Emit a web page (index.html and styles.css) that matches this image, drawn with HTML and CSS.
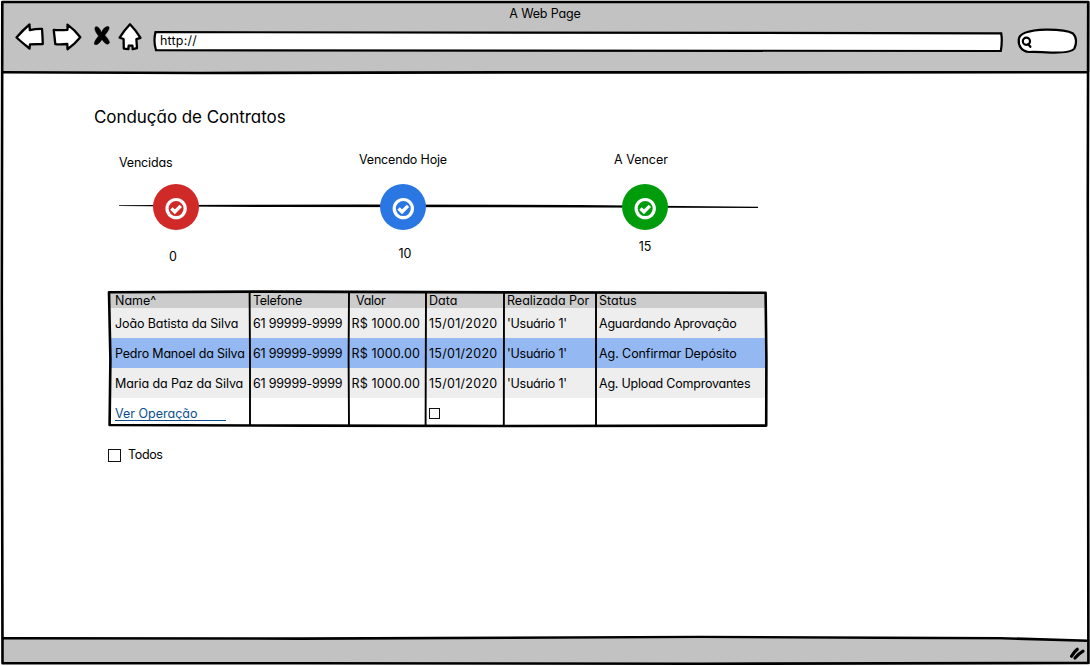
FILE: index.html
```html
<!DOCTYPE html>
<html lang="pt-BR">
<head>
<meta charset="utf-8">
<title>A Web Page</title>
<link rel="stylesheet" href="styles.css">
</head>
<body>
<div class="browser">
  <header class="chrome">
    <div class="window-title">A Web Page</div>
    <div class="toolbar">
      <svg class="nav back" viewBox="0 0 32 32"><path d="M2.5 15.5Q9 8 15.5 2.5L15.8 8.2Q22 6.6 28 6.8Q28.6 14 28.8 22L16 22.3L15.5 26.5Q8.5 21 2.5 15.5Z"/></svg>
      <svg class="nav forward" viewBox="0 0 32 32"><path d="M2.7 7.8Q9 8.3 16.5 7.8L16.5 2.6Q24 8 29.3 15.3Q24 22 16.5 27.2L16.3 22Q10 22.7 4.3 22.2Q3.6 15 2.7 7.8Z"/></svg>
      <svg class="nav stop" viewBox="0 0 20 32"><path class="x" d="M3.6 4.8Q6.8 4 9.5 10.5Q12 4.3 16.2 4.5Q19.3 5.3 12.8 13.2Q17.6 18.5 17.4 21Q15 24.5 10 17.4Q5.5 24 2.5 22.3Q1.6 20 6.6 14Q1.2 7.2 3.6 4.8Z"/></svg>
      <svg class="nav home" viewBox="0 0 26 32"><path d="M13 2.3Q19 8.5 23.5 15.8L19.4 17.2L20 26.2L15.7 27.2L15.4 23.6L11.7 23.7L11.4 27.2L6.8 26.6L6.6 17L2.6 15.7Q7.5 8 13 2.3Z"/></svg>
      <div class="address">
        <svg class="outline" viewBox="0 0 852 24"><path d="M3.5 3.1Q300 2.1 849.2 4.3Q850.5 12 848.8 22Q500 22.4 4 21.2Q1.2 12 3.5 3.1Z"/></svg>
        <span class="url">http://</span>
      </div>
      <svg class="search" viewBox="0 0 64 32"><path class="pill" d="M3.8 14.5C4 8 16 5.2 31 4.7C44 4.6 53 5.6 58 8.5C62 12.5 61.6 19 59.4 23.5C57 27 46 27.8 36 27.6C27 27 22 26.8 14 27C7 26.5 3 21 3.8 14.5Z"/><circle class="lens" cx="11.4" cy="16.2" r="3.6"/><path class="lens" d="M13.2 19.2L15.4 21.8"/></svg>
    </div>
  </header>

  <main class="page">
    <h1 class="heading">Condução de Contratos</h1>

    <section class="steps">
      <svg class="track" viewBox="0 0 640 6"><path d="M0 2.2L36 2L240 1.6L460 2L639 3.7L639 4.9L380 4.3L150 4L60 3.5L0 2.9Z"/></svg>
      <div class="step overdue">
        <span class="label">Vencidas</span>
        <svg class="node" viewBox="0 0 46 46"><circle class="disc" cx="23" cy="23" r="23"/><circle class="ring" cx="23.1" cy="24.6" r="9.1"/><path class="tick" d="M18.4 24.5L21.8 27.8L27.8 21.9"/></svg>
        <span class="count">0</span>
      </div>
      <div class="step today">
        <span class="label">Vencendo Hoje</span>
        <svg class="node" viewBox="0 0 46 46"><circle class="disc" cx="23" cy="23" r="23"/><circle class="ring" cx="23.3" cy="24.6" r="9.1"/><path class="tick" d="M18.6 24.5L22 27.8L28 21.9"/></svg>
        <span class="count">10</span>
      </div>
      <div class="step upcoming">
        <span class="label">A Vencer</span>
        <svg class="node" viewBox="0 0 46 46"><circle class="disc" cx="23" cy="23" r="23"/><circle class="ring" cx="23.2" cy="24.6" r="9.1"/><path class="tick" d="M18.5 24.5L21.9 27.8L27.9 21.9"/></svg>
        <span class="count">15</span>
      </div>
    </section>

    <section class="contracts">
      <div class="row head"><span>Name^</span><span class="c-phone-head">Telefone</span><span class="c-value-head">Valor</span><span>Data</span><span>Realizada Por</span><span>Status</span></div>
      <div class="row"><span class="c-name">João Batista da Silva</span><span class="c-phone">61 99999-9999</span><span class="c-value">R$ 1000.00</span><span class="c-date">15/01/2020</span><span class="c-user">'Usuário 1'</span><span class="c-status">Aguardando Aprovação</span></div>
      <div class="row selected"><span class="c-name tight">Pedro Manoel da Silva</span><span class="c-phone">61 99999-9999</span><span class="c-value">R$ 1000.00</span><span class="c-date">15/01/2020</span><span class="c-user">'Usuário 1'</span><span class="c-status loose">Ag. Confirmar Depósito</span></div>
      <div class="row"><span class="c-name">Maria da Paz da Silva</span><span class="c-phone">61 99999-9999</span><span class="c-value">R$ 1000.00</span><span class="c-date">15/01/2020</span><span class="c-user">'Usuário 1'</span><span class="c-status">Ag. Upload Comprovantes</span></div>
      <div class="row last"><span><a class="link">Ver Operação</a></span><span></span><span></span><span class="c-box"><i class="box small"></i></span><span></span><span></span></div>
      <svg class="rules" viewBox="0 0 662 140">
        <path class="edge" d="M2 3.2L160 2.6L400 3.4L658.6 3.8L659.4 70L659.2 136.6L400 137L200 136.6L2.6 136L3.4 70L2 3.2Z"/>
        <path class="divider" d="M142.6 3L143 70L143 136M242 3L241.6 70L242 136M319 3L318.6 136M397 3L396.8 136M489 3L489 136"/>
      </svg>
    </section>

    <div class="all"><i class="box"></i><span>Todos</span></div>
  </main>

  <footer class="statusbar">
    <svg class="grip" viewBox="0 0 18 16"><path d="M2.5 11.2Q5 7 8.3 4.2M6 13Q10 8.5 14 6.2"/></svg>
  </footer>

  <svg class="frame" viewBox="0 0 1090 666">
    <path class="corner" d="M0 638.4H300Q800 636.5 1088 640.8V637H0Z"/>
    <path d="M2.3 2L540 2L1088.2 2L1087.8 200L1088.4 663L700 663.8L300 663.2L2.5 663.2L1.8 300Z"/>
    <path d="M2 72.3L200 73L500 72.4L1088 72.3"/>
    <path d="M2 638.2L300 638.6L700 637L1000 638.2L1088 640.8"/>
  </svg>
</div>
</body>
</html>
```
FILE: styles.css
```css
* { box-sizing: border-box; }

body {
  margin: 0;
  background: #fff;
  color: #000;
  font: 420 12.5px/16px Inter, "Open Sans", sans-serif;
  font-feature-settings: "cv11";
}

svg { display: block; flex: none; }

.browser {
  position: relative;
  display: grid;
  grid-template-rows: 72px 1fr 27px;
  width: 1090px;
  height: 666px;
  overflow: hidden;
}

.frame {
  position: absolute;
  inset: 0;
  width: 1090px;
  height: 666px;
  pointer-events: none;
}
.frame path { fill: none; stroke: #000; stroke-width: 2.6; stroke-linejoin: round; }
.frame .corner { fill: #fff; stroke: none; }

/* Browser chrome */
.chrome { background: #c2c2c2; padding: 4px 11px 0 14px; margin: 2px 2px 0; }
.window-title { height: 16px; line-height: 15px; padding-right: 5px; text-align: center; letter-spacing: -0.15px; }
.toolbar { display: flex; align-items: flex-start; margin-left: -2px; }
.nav { height: 32px; fill: #fff; stroke: #000; stroke-width: 2.3; stroke-linejoin: round; }
.back { width: 32px; }
.forward { width: 32px; margin-left: 5px; }
.stop { width: 20px; margin-left: 9px; }
.nav .x { fill: #000; stroke-width: 0.6; }
.home { width: 26px; margin-left: 5px; }
.address { position: relative; width: 852px; height: 24px; margin: 7px 0 0 9px; padding: 4px 0 0 8px; }
.outline { position: absolute; inset: 0; width: 852px; height: 24px; fill: #fff; stroke: #000; stroke-width: 2.2; }
.url { position: relative; letter-spacing: 0.2px; }
.search { width: 64px; height: 32px; margin: 3px 0 0 11px; }
.pill { fill: #fff; stroke: #000; stroke-width: 2.2; }
.lens { fill: none; stroke: #000; stroke-width: 2.2; stroke-linecap: round; }

/* Page */
.page { padding: 35px 0 0 93px; }
.heading { margin: 0; padding-left: 1px; font-size: 17px; line-height: 20px; font-weight: 420; letter-spacing: -0.05px; }

.steps {
  position: relative;
  display: grid;
  grid-template-columns: 240px 255px 145px;
  height: 137px;
  margin: 24px 0 0 26px;
}
.track { position: absolute; left: 0; top: 52px; width: 640px; height: 6px; }
.step { position: relative; display: flex; flex-direction: column; align-items: flex-start; }
.label { height: 33px; padding-top: 1px; letter-spacing: -0.18px; }
.node { width: 46px; height: 46px; }
.ring { fill: none; stroke: #fff; stroke-width: 3.2; }
.tick { fill: none; stroke: #fff; stroke-width: 3.4; }
.count { width: 46px; text-align: center; }

.overdue .label { padding-top: 4px; }
.overdue .node { margin-left: 34px; fill: #d02a28; }
.overdue .count { margin: 19px 0 0 31px; }
.today .node { margin-left: 21px; fill: #2a77e4; }
.today .count { margin: 16px 0 0 23px; }
.upcoming .label { letter-spacing: 0; }
.upcoming .node { margin-left: 8px; fill: #009c0c; }
.upcoming .count { margin: 9px 0 0 8px; }

/* Table */
.contracts { position: relative; width: 656px; margin: 4px 0 0 17px; }
.row {
  display: grid;
  grid-template-columns: 140px 99px 77px 78px 92px 170px;
  height: 30px;
  line-height: 32px;
  background: #eee;
  white-space: nowrap;
}
.row > span { padding-left: 3px; }
.row > span:first-child { padding-left: 5px; }
.row.head { height: 16px; line-height: 17px; background: #ccc; }
.row.selected { background: #94b9f2; }
.row.last { height: 27px; background: #fff; }
.row .c-value-head { padding-left: 7px; letter-spacing: -0.3px; }
.c-phone-head { letter-spacing: -0.27px; }
.c-name { letter-spacing: -0.1px; }
.c-name.tight { letter-spacing: -0.18px; }
.c-phone { letter-spacing: -0.2px; }
.row .c-value { padding-left: 2.5px; letter-spacing: 0.15px; }
.c-date { letter-spacing: 0.28px; }
.c-user { letter-spacing: -0.25px; }
.c-status { letter-spacing: -0.22px; }
.c-status.loose { letter-spacing: -0.08px; }

.link {
  display: block;
  width: 111px;
  height: 23px;
  border-bottom: 1px solid #0b4f91;
  color: #0b4f91;
}
.rules { position: absolute; left: -3px; top: -3px; width: 662px; height: 140px; fill: none; stroke: #000; }
.edge { stroke-width: 2.6; stroke-linejoin: round; }
.divider { stroke-width: 1.9; }

.box { display: block; width: 13px; height: 13px; border: 1.4px solid #111; background: #fff; }
.box.small { width: 11px; height: 11px; margin-top: 10px; }

.all { display: flex; align-items: center; gap: 7px; margin: 22px 0 0 15px; letter-spacing: -0.35px; }

/* Bottom bar */
.statusbar { display: flex; justify-content: flex-end; margin: 0 2px 2px; padding: 6px 3px 0 0; background: #c2c2c2; }
.grip { width: 18px; height: 16px; fill: none; stroke: #000; stroke-width: 3.2; stroke-linecap: round; }
```
